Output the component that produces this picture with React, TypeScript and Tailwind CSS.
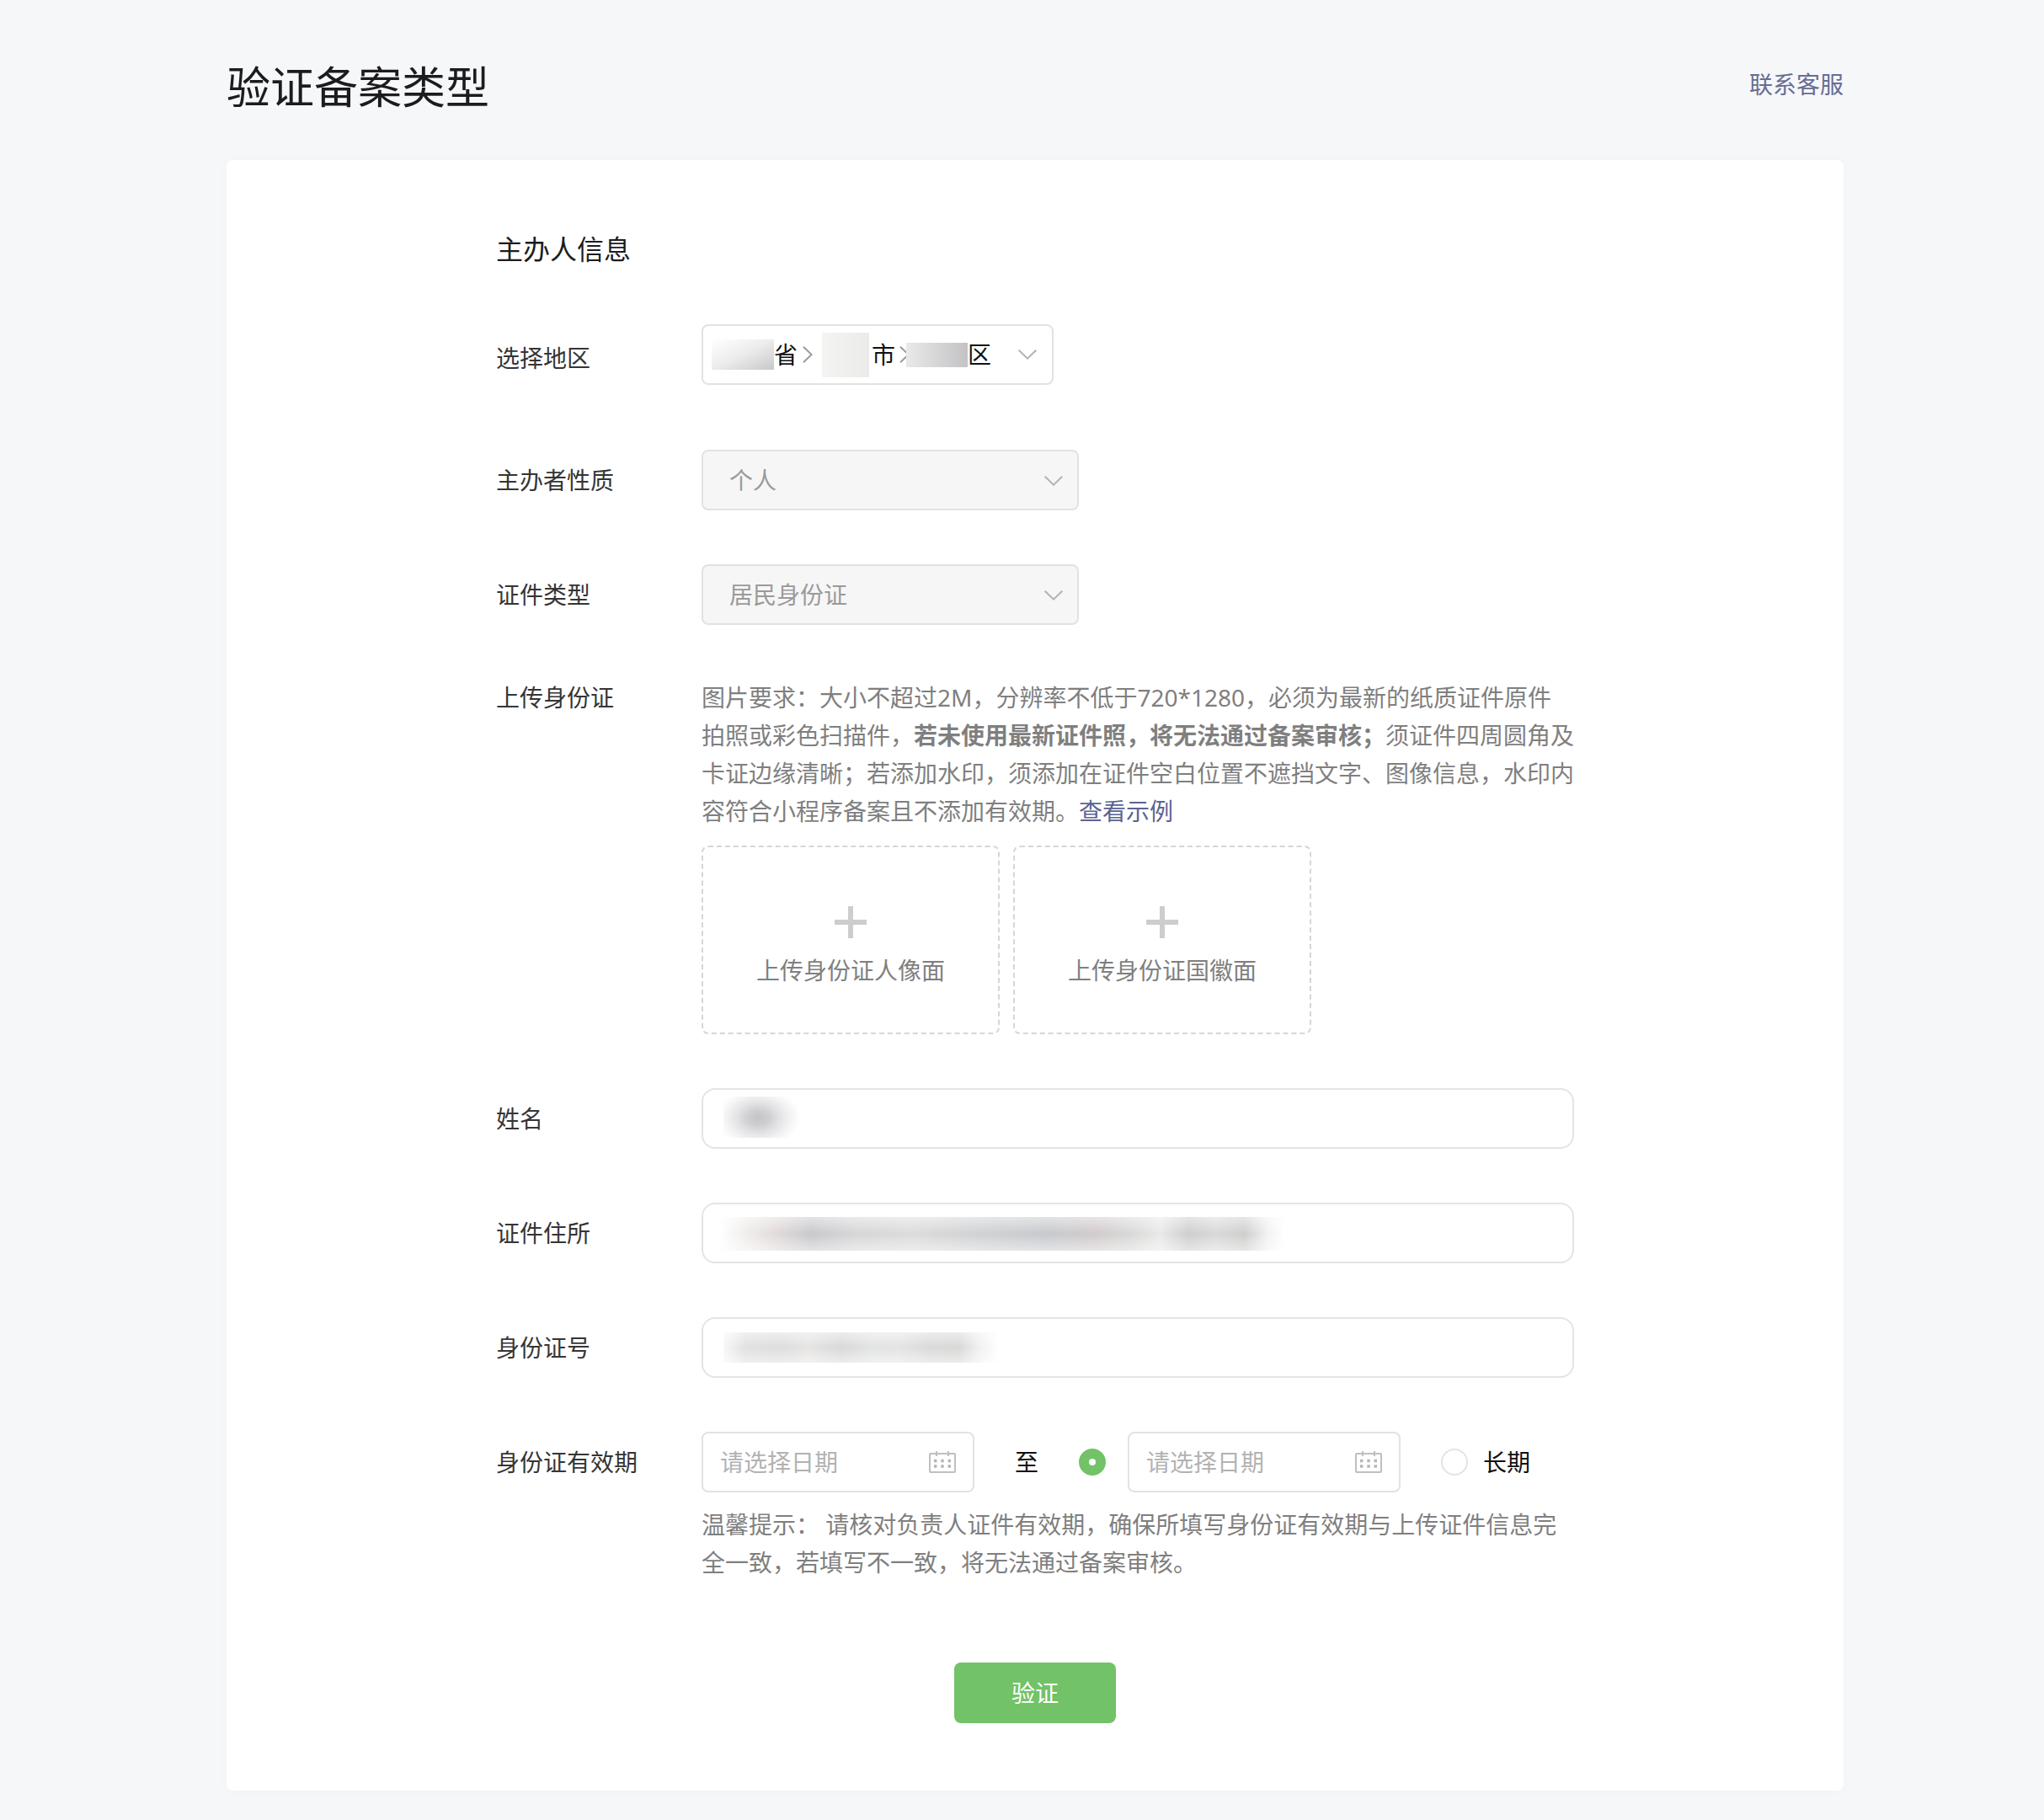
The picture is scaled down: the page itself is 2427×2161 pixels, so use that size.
import React from "react";

const CHINESE_FONT = "font-['Noto_Sans','Noto_Sans_CJK_SC',sans-serif]";

function ChevronDown({ className = "" }: { className?: string }) {
  return (
    <svg width="22" height="12" viewBox="0 0 22 12" fill="none" stroke="#b2b2b2" strokeWidth="2" className={className} aria-hidden="true">
      <polyline points="0.7 0.7 11 10.6 21.3 0.7" />
    </svg>
  );
}

function CalendarIcon({ className = "" }: { className?: string }) {
  return (
    <svg width="32" height="26" viewBox="0 0 32 26" fill="none" className={className} aria-hidden="true">
      <rect x="1" y="3" width="30" height="22" rx="1" stroke="#bfbfbf" strokeWidth="2" />
      <path d="M9 0v6M23 0v6" stroke="#bfbfbf" strokeWidth="2" />
      <path d="M6 11.5h3.4M14.3 11.5h3.4M22.6 11.5h3.4M6 18h3.4M14.3 18h3.4M22.6 18h3.4" stroke="#b5b5b5" strokeWidth="3.4" />
    </svg>
  );
}

function FormRow({ label, htmlFor, children }: { label: string; htmlFor?: string; children: React.ReactNode }) {
  return (
    <div className="flex items-start mb-16">
      <label htmlFor={htmlFor} className="w-[244px] shrink-0 leading-[72px] text-[#353535]">
        {label}
      </label>
      <div className="flex-1 min-w-0">{children}</div>
    </div>
  );
}

function DisabledSelect({ id, value }: { id: string; value: string }) {
  return (
    <div className="relative w-[448px] max-w-full">
      <select
        id={id}
        disabled
        className="block w-full h-[72px] pl-[31px] pr-16 appearance-none rounded-lg border-2 border-[#e2e2e2] bg-[#f6f6f6] text-[#9a9a9a] opacity-100"
      >
        <option>{value}</option>
      </select>
      <ChevronDown className="absolute right-[19px] top-[31px] pointer-events-none" />
    </div>
  );
}

function MaskedInput({ id, children }: { id: string; children: React.ReactNode }) {
  return (
    <div className="relative">
      <input id={id} type="text" className="block w-full h-[72px] px-6 rounded-2xl border-2 border-[#e4e4e4] bg-white" />
      {children}
    </div>
  );
}

function DateInput({ id, label }: { id: string; label: string }) {
  return (
    <div className="relative w-[324px]">
      <input
        id={id}
        type="text"
        aria-label={label}
        placeholder="请选择日期"
        className="block w-full h-[72px] pl-5 pr-16 rounded-lg border-2 border-[#e2e2e2] bg-white placeholder:text-[#b2b2b2]"
      />
      <CalendarIcon className="absolute right-[22px] top-[23px] pointer-events-none" />
    </div>
  );
}

function UploadBox({ text }: { text: string }) {
  return (
    <button type="button" className="w-[354px] h-[224px] pt-[70px] flex flex-col items-center justify-start gap-4 rounded-lg border-2 border-dashed border-[#d6d6d6] text-[#7f7f7f] cursor-pointer">
      <svg width="38" height="38" viewBox="0 0 38 38" stroke="#cdcdcd" strokeWidth="6" aria-hidden="true">
        <path d="M19 0v38M0 19h38" />
      </svg>
      <span className="leading-[45px]">{text}</span>
    </button>
  );
}

const radioClass =
  "block w-8 h-8 shrink-0 appearance-none rounded-full border-2 border-[#e4e4e4] bg-white checked:border-[12px] checked:border-[#72c267]";

export default function App() {
  return (
    <div className={`min-h-screen bg-[#f6f7f9] pl-[31px] pb-[34px] text-[28px] ${CHINESE_FONT}`} lang="zh-CN">
      <div className="max-w-[1920px] mx-auto">
        {/* Page header */}
        <header className="flex items-start justify-between pt-16 pb-12">
          <h1 className="text-[52px] leading-[78px] text-[#1c1c1e]">验证备案类型</h1>
          <a href="#service" className="leading-[72px] text-[#666d94]">
            联系客服
          </a>
        </header>

        <main className="rounded-lg bg-white pt-20 pb-20 shadow-[0_0_20px_rgba(0,0,0,0.02)]">
          <form id="verify-form" className="pl-80 pr-80">
            <h2 className="text-[32px] leading-[51px] mb-16 text-[#1c1c1e]">主办人信息</h2>

            {/* Region */}
            <div className="flex items-start mb-[69px]">
              <label htmlFor="region" className="w-[244px] shrink-0 leading-[80px] text-[#353535]">
                选择地区
              </label>
              <button
                id="region"
                type="button"
                className="w-[418px] h-[72px] pl-[10px] pr-[18px] flex items-center rounded-lg border-2 border-[#e2e2e2] bg-white text-[#111111] cursor-pointer"
              >
                <span className="w-[74px] h-9 bg-linear-to-br from-white via-[#ececec] to-[#c8c8c8]" />
                <span>省</span>
                <svg width="12" height="20" viewBox="0 0 12 20" fill="none" stroke="#9b9b9b" strokeWidth="2" className="ml-[6px]" aria-hidden="true">
                  <polyline points="1 0.7 10.6 10 1 19.3" />
                </svg>
                <span className="ml-[11px] w-14 h-[53px] bg-linear-to-r from-[#f4f4f3] to-[#ebebea]" />
                <span className="ml-[3px]">市</span>
                <svg width="8" height="20" viewBox="0 0 8 20" fill="none" stroke="#9b9b9b" strokeWidth="2" className="ml-[5px]" aria-hidden="true">
                  <polyline points="1 0.7 10.6 10 1 19.3" />
                </svg>
                <span className="w-[73px] h-[29px] bg-linear-to-r from-[#e9e9e9] via-[#d6d6d7] to-[#c3c3c6]" />
                <span>区</span>
                <ChevronDown className="ml-auto" />
              </button>
            </div>

            <FormRow label="主办者性质" htmlFor="owner-type">
              <DisabledSelect id="owner-type" value="个人" />
            </FormRow>

            <FormRow label="证件类型" htmlFor="cert-type">
              <DisabledSelect id="cert-type" value="居民身份证" />
            </FormRow>

            {/* ID card upload */}
            <div className="flex items-start mb-16">
              <span className="w-[244px] shrink-0 leading-[45px] text-[#353535]">上传身份证</span>
              <div className="flex-1 min-w-0">
                <p className="leading-[45px] mb-[18px] -mr-1 text-[#7f7f7f]">
                  图片要求：大小不超过2M，分辨率不低于720*1280，必须为最新的纸质证件原件
                  <br />
                  拍照或彩色扫描件，
                  <strong className="font-bold">若未使用最新证件照，将无法通过备案审核；</strong>
                  须证件四周圆角及卡证边缘清晰；若添加水印，须添加在证件空白位置不遮挡文字、图像信息，水印内容符合小程序备案且不添加有效期。
                  <a href="#example" className="text-[#5b6392]">查看示例</a>
                </p>
                <div className="flex flex-wrap gap-4">
                  <UploadBox text="上传身份证人像面" />
                  <UploadBox text="上传身份证国徽面" />
                </div>
              </div>
            </div>

            <FormRow label="姓名" htmlFor="name">
              <MaskedInput id="name">
                <span className="absolute left-[26px] top-[10px] w-[90px] h-[49px] bg-[radial-gradient(50px_36px_at_46%_52%,#c4c4c9_0%,#cfcfd2_25%,#e3e3e5_50%,#f3f3f4_75%,#ffffff_100%)]" />
              </MaskedInput>
            </FormRow>

            <FormRow label="证件住所" htmlFor="address">
              <MaskedInput id="address">
                <span className="absolute left-[22px] top-[17px] w-[670px] h-10 bg-[linear-gradient(to_right,#ffffff_0%,#eeecea_5%,#e4dedb_9%,#c8c8cd_16%,#d6d6d8_24%,#dcdcdc_34%,#d0d1d3_46%,#c6c9cd_58%,#d2cbcc_67%,#d9d9d8_73%,#e9e9e9_78%,#cfcdce_83%,#d9d9d9_88%,#cfcecd_93%,#f2f2f2_97%,#ffffff_100%)]" />
                <span className="absolute left-[22px] top-[17px] w-[670px] h-10 bg-linear-to-b from-white/50 via-transparent to-white/50" />
              </MaskedInput>
            </FormRow>

            <FormRow label="身份证号" htmlFor="id-number">
              <MaskedInput id="id-number">
                <span className="absolute left-[26px] top-[18px] w-[326px] h-9 bg-[linear-gradient(to_right,#f8f8f8_0%,#e2e1e2_8%,#dddddd_20%,#e6e4e3_31%,#d9d9da_43%,#e2e3e4_54%,#e4e4e4_64%,#dadada_75%,#d8d8d7_86%,#f0f0f0_93%,#ffffff_100%)]" />
                <span className="absolute left-[26px] top-[18px] w-[326px] h-9 bg-linear-to-b from-white/50 via-transparent to-white/50" />
              </MaskedInput>
            </FormRow>

            {/* Validity period */}
            <div className="flex items-start">
              <label htmlFor="valid-from" className="w-[244px] shrink-0 leading-[72px] text-[#353535]">
                身份证有效期
              </label>
              <div className="flex-1 min-w-0">
                <div className="flex items-center mb-4 text-[#111111]">
                  <DateInput id="valid-from" label="有效期开始日期" />
                  <span className="ml-12">至</span>
                  <input type="radio" name="validity" defaultChecked aria-label="指定结束日期" className={`ml-12 mr-[26px] ${radioClass}`} />
                  <DateInput id="valid-to" label="有效期结束日期" />
                  <label className="ml-12 flex items-center gap-[18px]">
                    <input type="radio" name="validity" className={radioClass} />
                    长期
                  </label>
                </div>
                <p className="leading-[45px] text-[#7f7f7f]">
                  温馨提示： 请核对负责人证件有效期，确保所填写身份证有效期与上传证件信息完全一致，若填写不一致，将无法通过备案审核。
                </p>
              </div>
            </div>
          </form>

          <div className="mt-24 flex justify-center">
            <button type="submit" form="verify-form" className="w-48 h-[72px] rounded-lg bg-[#72c267] text-white cursor-pointer">
              验证
            </button>
          </div>
        </main>
      </div>
    </div>
  );
}
